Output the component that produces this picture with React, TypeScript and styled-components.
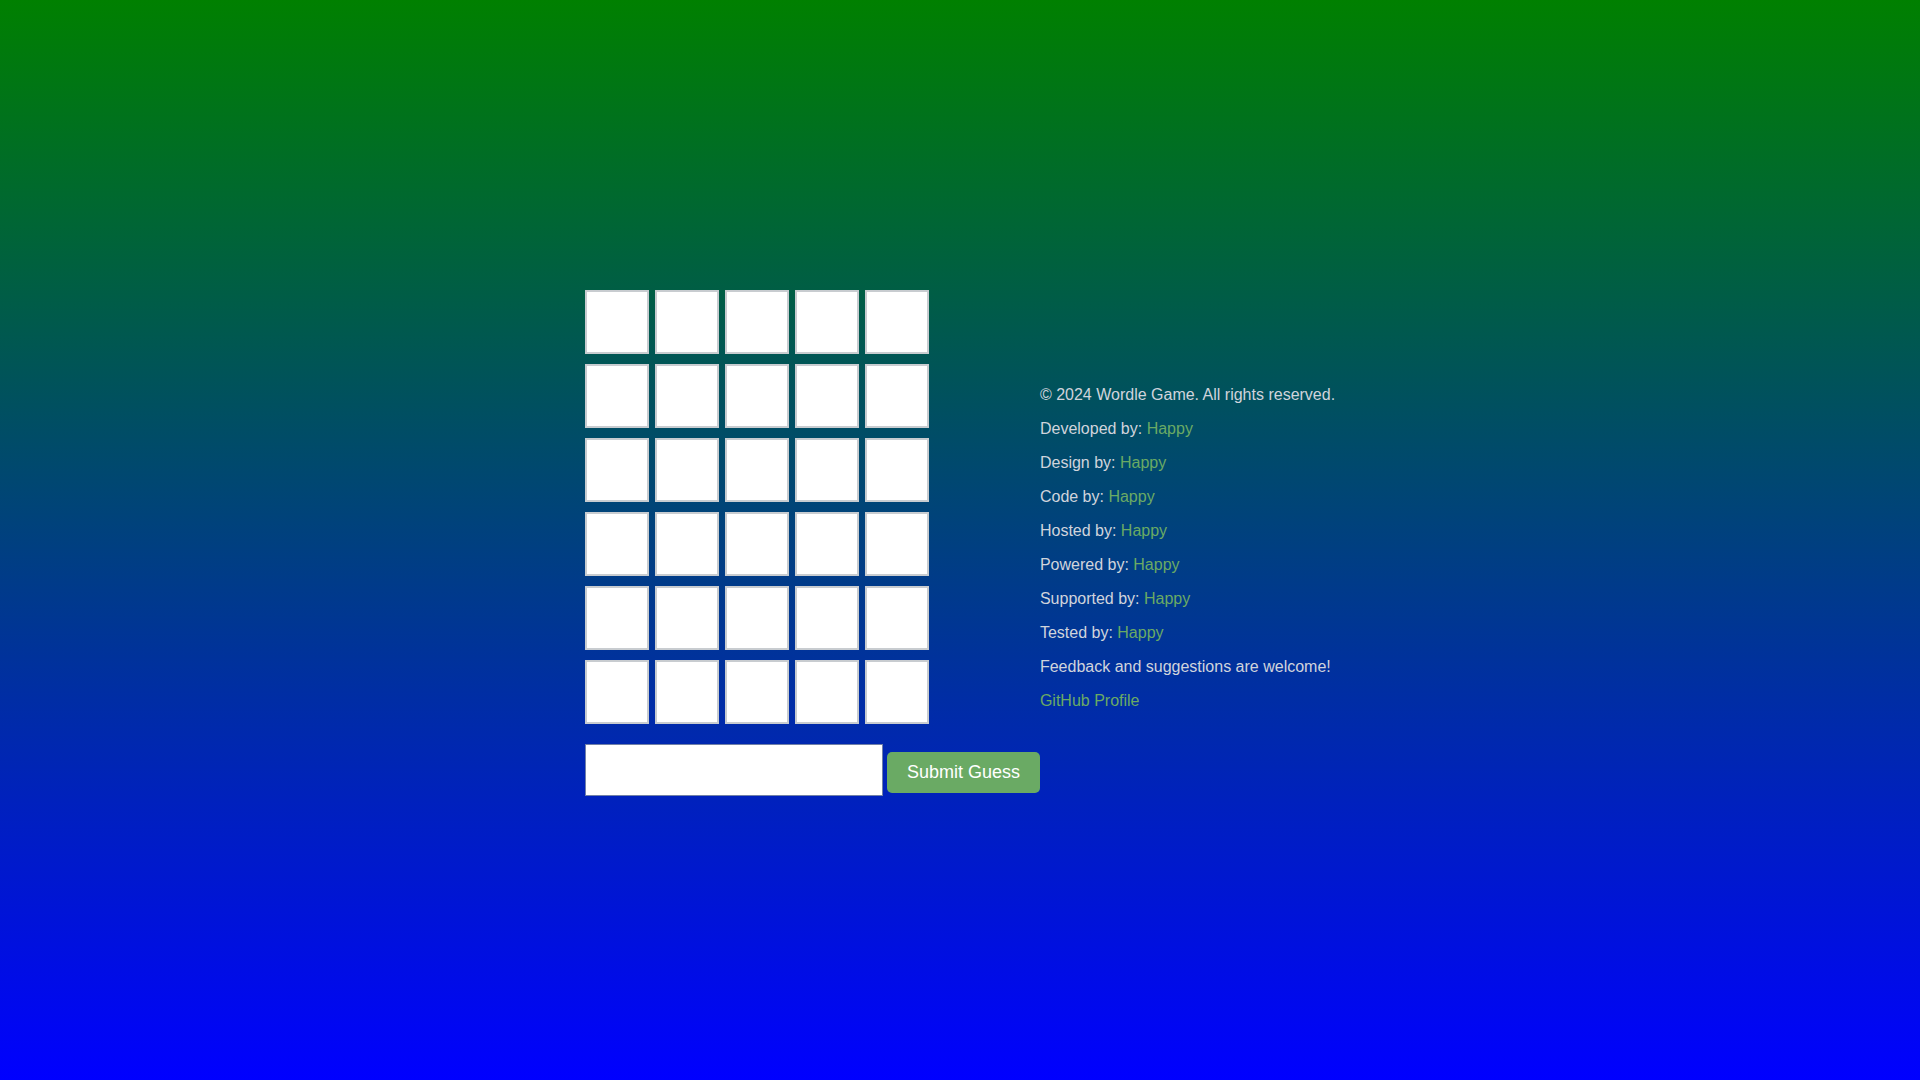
import React from "react";
import styled, { createGlobalStyle } from "styled-components";

const GlobalStyle = createGlobalStyle`
  html, body {
    margin: 0;
    padding: 0;
  }
  body {
    font-family: "Liberation Sans", Arial, sans-serif;
    background: linear-gradient(to bottom, #008000, #0000ff);
    min-height: 100vh;
  }
`;

const Page = styled.div`
  min-height: 100vh;
  box-sizing: border-box;
  display: flex;
  justify-content: center;
  align-items: center;
  padding-top: 6px;
`;

const Main = styled.div`
  display: flex;
  align-items: center;
`;

const GameColumn = styled.div`
  display: flex;
  flex-direction: column;
`;

const Board = styled.div`
  display: flex;
  flex-direction: column;
  gap: 10px;
`;

const Row = styled.div`
  display: flex;
  gap: 6px;
`;

const Tile = styled.div`
  width: 64px;
  height: 64px;
  box-sizing: border-box;
  background: #ffffff;
  border: 2px solid #c8ccd0;
`;

const Form = styled.form`
  display: flex;
  align-items: center;
  gap: 4px;
  margin-top: 20px;
`;

const GuessInput = styled.input`
  width: 298px;
  height: 52px;
  box-sizing: border-box;
  border: 1px solid #7080a8;
  background: #ffffff;
  font-size: 24px;
  padding: 10px;
  outline: none;
`;

const SubmitButton = styled.button`
  height: 41px;
  margin-top: 5px;
  padding: 0 20px;
  border: none;
  border-radius: 5px;
  background: #6aaa64;
  color: #ffffff;
  font-family: "Liberation Sans", Arial, sans-serif;
  font-size: 18px;
  cursor: pointer;
`;

const Footer = styled.footer`
  color: #d0d4dc;
  font-size: 16px;
  padding-top: 10px;
`;

const Line = styled.p`
  margin: 16px 0;
  line-height: 18px;
  white-space: nowrap;
`;

const Link = styled.a`
  color: #6aaa64;
  text-decoration: none;
`;

const credits = [
  "Developed by",
  "Design by",
  "Code by",
  "Hosted by",
  "Powered by",
  "Supported by",
  "Tested by",
];

export default function App() {
  const rows = Array.from({ length: 6 });
  const cols = Array.from({ length: 5 });
  return (
    <>
      <GlobalStyle />
      <Page>
        <Main>
          <GameColumn>
            <Board>
              {rows.map((_, r) => (
                <Row key={r}>
                  {cols.map((_, c) => (
                    <Tile key={c} />
                  ))}
                </Row>
              ))}
            </Board>
            <Form onSubmit={(e) => e.preventDefault()}>
              <GuessInput type="text" maxLength={5} />
              <SubmitButton type="submit">Submit Guess</SubmitButton>
            </Form>
          </GameColumn>
          <Footer>
            <Line>© 2024 Wordle Game. All rights reserved.</Line>
            {credits.map((c) => (
              <Line key={c}>
                {c}: <Link href="#">Happy</Link>
              </Line>
            ))}
            <Line>Feedback and suggestions are welcome!</Line>
            <Line>
              <Link href="#">GitHub Profile</Link>
            </Line>
          </Footer>
        </Main>
      </Page>
    </>
  );
}
